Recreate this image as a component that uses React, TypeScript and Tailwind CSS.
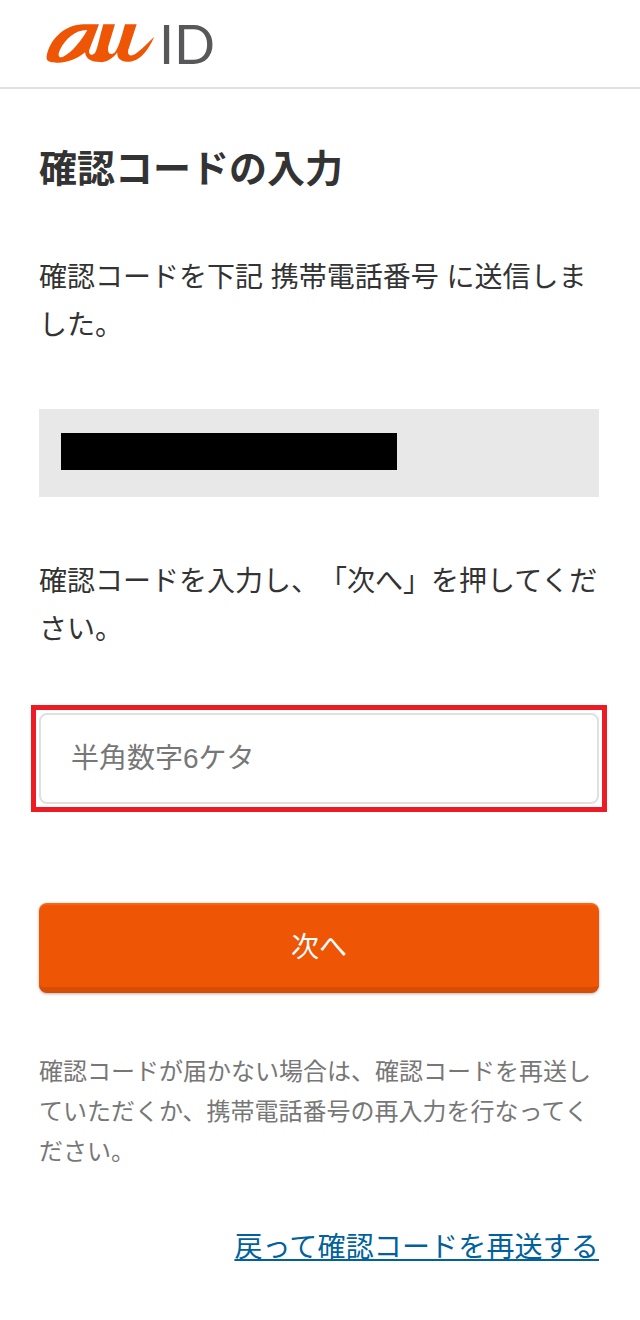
const cjk = "font-['Liberation_Sans','Noto_Sans_CJK_JP',sans-serif] [text-spacing-trim:space-all]";

function AuLogo() {
  return (
    <svg width="110" height="41" viewBox="138 70 330 123" fill="#ee5505" className="block">
      <path
        fillRule="evenodd"
        d="M140 170 C148 120 195 72 255 74 L297 74 L268 150 C264 165 275 170 285 160 C292 150 298 115 310 74 L345 74 L325 140 C320 165 335 168 345 158 C358 140 366 105 375 74 L410 74 L385 150 C380 170 395 172 410 160 C430 145 448 125 463 111 C445 150 420 188 380 186 C362 185 350 175 352 158 C340 175 320 190 300 187 C275 187 258 180 255 158 C235 175 205 190 170 189 C150 188 137 185 140 170 Z M262 91 C226 90 196 118 180 150 C172 168 176 176 188 172 C215 160 245 122 262 91 Z"
      />
    </svg>
  );
}

export default function App() {
  return (
    <div className={`min-h-[1320px] bg-white text-[#333] ${cjk}`}>
      <header className="flex h-[89px] items-start gap-[3px] border-b-2 border-[#e0e0e0] pl-[46px] pt-[23px]">
        <AuLogo />
        <span className="font-['Lato',sans-serif] text-[54px] font-normal leading-[41px] text-[#58585a]">ID</span>
      </header>

      <main className="w-[599px] pl-[39px]">
        <h1 className="mt-[56px] text-[38px] font-bold leading-[48px]">確認コードの入力</h1>

        <p className="mt-[61px] text-[28px] leading-[48px]">確認コードを下記 携帯電話番号 に送信しました。</p>

        <div className="mt-[59px] h-[88px] bg-[#e8e8e8] px-[22px] py-6">
          <div className="h-[37px] w-[336px] bg-black" />
        </div>

        <p className="mt-[61px] text-[28px] leading-[48px]">確認コードを入力し、「次へ」を押してください。</p>

        <div className="-mx-2 mt-[51px] border-[5px] border-[#ed1c24] p-[3px]">
          <input
            readOnly
            placeholder="半角数字6ケタ"
            className="block h-[91px] w-full rounded-lg border-2 border-[#e0e0e0] bg-white px-[30px] text-[28px] outline-none placeholder:text-[#777]"
          />
        </div>

        <button className="mt-[91px] block h-[90px] w-full rounded-lg border-t-2 border-b-[6px] border-t-[#ff6210] border-b-[#d74d04] bg-[#ee5505] pt-1 text-[28px] text-white shadow-[0_1px_3px_rgba(0,0,0,0.3)]">
          次へ
        </button>

        <p className="mt-[59px] text-2xl leading-10 text-[#777]">確認コードが届かない場合は、確認コードを再送していただくか、携帯電話番号の再入力を行なってください。</p>

        <div className="mt-[52px] text-right">
          <a href="#" className="text-[28px] leading-[48px] tracking-[0.15px] text-[#00619e] underline">戻って確認コードを再送する</a>
        </div>
      </main>
    </div>
  );
}
